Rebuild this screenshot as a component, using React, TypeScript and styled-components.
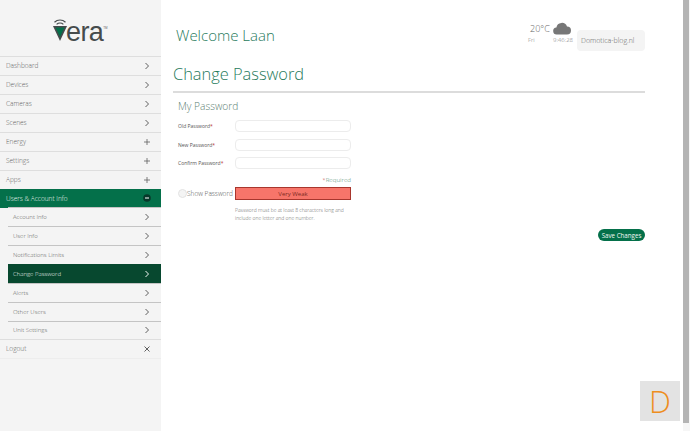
import React from "react";
import styled, { createGlobalStyle } from "styled-components";

const Global = createGlobalStyle`
  html, body { margin: 0; padding: 0; background: #fff; height: 100%; overflow: hidden; }
  body { font-family: "Open Sans", "Liberation Sans", sans-serif; font-weight: 300; }
`;
const Page = styled.div`
  width: 690px; height: 431px; display: flex; overflow: hidden; position: relative; background: #fff;
`;
const Sidebar = styled.aside`
  width: 161px; flex: none; height: 431px; background: #f4f4f4;
`;
const LogoBox = styled.div`
  height: 56px; display: flex; justify-content: center; align-items: flex-start;
`;
const LogoInner = styled.div`
  width: 54px; height: 24px; margin-top: 18px; margin-left: -1px; display: flex; align-items: flex-end; position: relative;
`;
const LogoWord = styled.span`
  font-size: 27px; line-height: 22px; letter-spacing: -0.6px; padding-left: 13px; color: #454b4c;
  font-family: "Liberation Sans", sans-serif; font-weight: 400; position: relative; top: 1px;
`;
const LogoMark = styled.svg`
  position: absolute; left: 0; top: 0;
`;
const Tm = styled.span`
  font-size: 3px; align-self: flex-start; margin-top: 8px; color: #666; font-family: "Liberation Sans", sans-serif;
`;
const Nav = styled.nav`
  display: flex; flex-direction: column;
`;
const Row = styled.div<{ $sub?: boolean; $state?: "open" | "active"; $short?: boolean }>`
  height: ${p => (p.$short ? 16 : 17)}px; margin-left: ${p => (p.$sub ? 8 : 0)}px; padding: 0 10px 1px ${p => (p.$sub ? 5 : 6)}px;
  display: flex; align-items: center; justify-content: space-between; font-size: ${p => (p.$sub ? 6 : 6.5)}px; box-sizing: content-box;
  margin-bottom: -1px;
  border-top: 1px solid ${p => (p.$sub ? "#c4c4c4" : "#dedede")};
  border-bottom: 1px solid ${p => (p.$sub ? "transparent" : "#ededed")};
  color: ${p => (p.$state ? "#f1f7f4" : "#5f5f5f")};
  background: ${p => (p.$state === "open" ? "#04704a" : p.$state === "active" ? "#07482f" : "#f4f4f4")};
  ${p => p.$state && "border-color: transparent;"}
`;
const RowIcon = styled.svg`
  width: 8px; height: 8px; flex: none; display: block;
`;
const Main = styled.main`
  flex: 1; min-width: 0; padding: 0 45px 0 12px; display: flex; flex-direction: column;
`;
const Header = styled.header`
  height: 63px; display: flex; justify-content: space-between;
`;
const Welcome = styled.h2`
  margin: 23px 0 0 3px; font-size: 15px; line-height: 24px; font-weight: 300; color: #1f7a5c;
`;
const HeaderRight = styled.div`
  display: flex; align-items: flex-start; margin-top: 20px;
`;
const Weather = styled.div`
  width: 45px; display: flex; flex-direction: column; color: #666;
`;
const WeatherTop = styled.div`
  display: flex; justify-content: space-between; align-items: flex-start; font-size: 9px; line-height: 18px; padding-left: 2px;
`;
const WeatherBottom = styled.div`
  display: flex; justify-content: space-between; font-size: 6px; line-height: 9px; margin-top: -2px; color: #7a7a7a;
`;
const Cloud = styled.svg`
  width: 18px; height: 14px; margin-top: 1px; margin-right: 2px;
`;
const SiteBox = styled.div`
  width: 68px; height: 21px; margin-left: 4px; margin-top: 10px; background: #f4f4f4; border-radius: 4px;
  font-size: 7px; color: #666; display: flex; align-items: center; padding-left: 4px; box-sizing: border-box; white-space: nowrap;
`;
const Title = styled.h1`
  margin: 0; height: 28px; font-size: 16.4px; line-height: 22px; font-weight: 300; color: #1f7a5c; border-bottom: 2px solid #dcdcdc;
`;
const Section = styled.h3`
  margin: 6px 0 0 5px; font-size: 10.2px; line-height: 15px; font-weight: 300; color: #5d7f74;
`;
const Form = styled.div`
  margin-left: 5px; width: 173px; display: flex; flex-direction: column;
`;
const Field = styled.div`
  display: flex; align-items: center; height: 12px; margin-top: 6.5px; &:first-child { margin-top: 6px; }
`;
const Label = styled.label`
  width: 57px; font-size: 5px; font-weight: 400; color: #555; flex: none;
`;
const Star = styled.span`
  color: #b33;
`;
const Input = styled.div`
  width: 116px; height: 12px; border: 1px solid #ececec; border-radius: 4px; background: #fff; box-sizing: border-box; flex: none;
`;
const Required = styled.div`
  margin-top: 6px; height: 10px; text-align: right; font-size: 6.2px; line-height: 10px; color: #4f8a72;
`;
const StrengthRow = styled.div`
  margin-top: 2px; display: flex; align-items: center; height: 13px;
`;
const Check = styled.span`
  width: 7px; height: 7px; border: 1px solid #e3e3e3; border-radius: 50%; background: #f4f4f4; flex: none;
`;
const ShowLabel = styled.span`
  width: 48px; font-size: 6.5px; color: #555; flex: none; white-space: nowrap;
`;
const Strength = styled.div`
  width: 116px; height: 13px; box-sizing: border-box; background: #f7756a; border: 1px solid #a8362d;
  font-size: 6px; font-weight: 400; color: #7d2a22; display: flex; align-items: center; justify-content: center; flex: none;
`;
const Hint = styled.p`
  margin: 7px 0 0 57px; width: 116px; font-size: 5px; line-height: 7.5px; color: #666;
`;
const Actions = styled.div`
  display: flex; justify-content: flex-end; margin-top: 7px;
`;
const Save = styled.button`
  width: 47px; height: 12px; padding: 0; border: 0; border-radius: 6px; background: #04704a; color: #f2f8f5; font-size: 6.2px; font-weight: 400; font-family: inherit;
`;
const Badge = styled.div`
  position: absolute; left: 640px; top: 381px; width: 40px; height: 40px; background: #e3e3e3; color: #ee8e1f;
  font-size: 31px; font-weight: 300; display: flex; align-items: center; justify-content: center;
`;
const ScrollTrack = styled.div`
  position: absolute; left: 683px; top: 0; width: 7px; height: 431px; background: #f6f6f6;
`;
const ScrollThumb = styled.div`
  width: 6px; height: 423px; background: #b4b4b4;
`;

const Chevron = () => <RowIcon viewBox="0 0 8 8"><path d="M2.5 1l3 3-3 3" fill="none" stroke="currentColor" strokeWidth="1" /></RowIcon>;
const Plus = () => <RowIcon viewBox="0 0 8 8"><path d="M4 1v6M1 4h6" fill="none" stroke="currentColor" strokeWidth=".8" /></RowIcon>;
const Cross = () => <RowIcon viewBox="0 0 8 8"><path d="M1.5 1.5l5 5M6.5 1.5l-5 5" fill="none" stroke="currentColor" strokeWidth="1" /></RowIcon>;
const Minus = () => <RowIcon viewBox="0 0 8 8"><circle cx="4" cy="4" r="3.8" fill="#07382a" /><path d="M2 4h4" stroke="#fff" strokeWidth="1" /></RowIcon>;

type Item = { label: string; icon: "c" | "p" | "x" | "m"; sub?: boolean; state?: "open" | "active"; short?: boolean };
const items: Item[] = [
  { label: "Dashboard", icon: "c" }, { label: "Devices", icon: "c" }, { label: "Cameras", icon: "c" }, { label: "Scenes", icon: "c" },
  { label: "Energy", icon: "p" }, { label: "Settings", icon: "p" }, { label: "Apps", icon: "p" },
  { label: "Users & Account Info", icon: "m", state: "open", short: true },
  { label: "Account Info", icon: "c", sub: true }, { label: "User Info", icon: "c", sub: true }, { label: "Notifications Limits", icon: "c", sub: true },
  { label: "Change Password", icon: "c", sub: true, state: "active" }, { label: "Alerts", icon: "c", sub: true }, { label: "Other Users", icon: "c", sub: true }, { label: "Unit Settings", icon: "c", sub: true, short: true },
  { label: "Logout", icon: "x" },
];
const icons = { c: Chevron, p: Plus, x: Cross, m: Minus };

export default function App() {
  return (
    <Page>
      <Global />
      <Sidebar>
        <LogoBox>
          <LogoInner>
            <LogoMark width="14" height="24" viewBox="0 0 14 24">
              <path d="M1.5 4.2a8 8 0 0 1 11 0M3.6 6.4a5 5 0 0 1 6.8 0" fill="none" stroke="#454b4c" strokeWidth="1.2" />
              <path d="M0 8h14L7 23z" fill="#454b4c" />
              <path d="M2.5 9.5h9L7 19z" fill="#04704a" />
            </LogoMark>
            <LogoWord>era</LogoWord><Tm>TM</Tm>
          </LogoInner>
        </LogoBox>
        <Nav>
          {items.map(it => {
            const I = icons[it.icon];
            return <Row key={it.label} $sub={it.sub} $state={it.state} $short={it.short}><span>{it.label}</span><I /></Row>;
          })}
        </Nav>
      </Sidebar>
      <Main>
        <Header>
          <Welcome>Welcome Laan</Welcome>
          <HeaderRight>
            <Weather>
              <WeatherTop>
                <span>20°C</span>
                <Cloud viewBox="0 0 18 14"><path d="M4 13.5a3.5 3.5 0 0 1-.6-7A5.5 5.5 0 0 1 14 5.5a4 4 0 0 1 0 8z" fill="#777" /></Cloud>
              </WeatherTop>
              <WeatherBottom><span>Fri</span><span>9:46:28</span></WeatherBottom>
            </Weather>
            <SiteBox>Domotica-blog.nl</SiteBox>
          </HeaderRight>
        </Header>
        <Title>Change Password</Title>
        <Section>My Password</Section>
        <Form>
          <Field><Label>Old Password<Star>*</Star></Label><Input /></Field>
          <Field><Label>New Password<Star>*</Star></Label><Input /></Field>
          <Field><Label>Confirm Password<Star>*</Star></Label><Input /></Field>
          <Required><Star>*</Star>Required</Required>
          <StrengthRow><Check /><ShowLabel>Show Password</ShowLabel><Strength>Very Weak</Strength></StrengthRow>
          <Hint>Password must be at least 8 characters long and include one letter and one number.</Hint>
        </Form>
        <Actions><Save>Save Changes</Save></Actions>
      </Main>
      <ScrollTrack><ScrollThumb /></ScrollTrack>
      <Badge>D</Badge>
    </Page>
  );
}
